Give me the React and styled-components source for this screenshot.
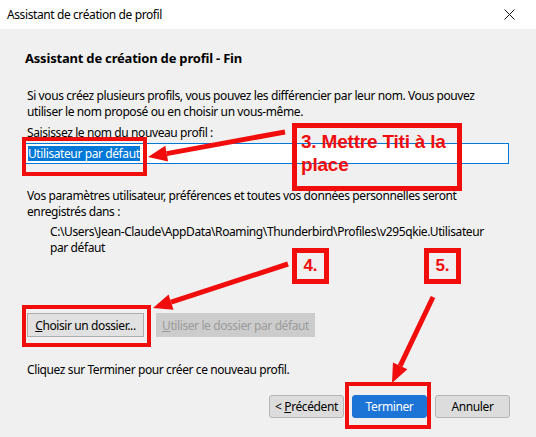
import styled, { createGlobalStyle } from "styled-components";

const GlobalStyle = createGlobalStyle`
    html, body {
        margin: 0;
        padding: 0;
        background: #f0f0f0;
    }
    body {
        font-family: 'Noto Sans', 'Liberation Sans', sans-serif;
        font-size: 12px;
        letter-spacing: -0.4px;
        color: #000000;
    }
`;

const RED = '#f20d0d';

export default function App() {
    return (
        <Window>
            <GlobalStyle />
            <TitleBar>
                <TitleText>Assistant de création de profil</TitleText>
                <CloseButton aria-label="Fermer">
                    <svg width="11" height="11" viewBox="0 0 11 11">
                        <path d="M0.5 0.5 L10.5 10.5 M10.5 0.5 L0.5 10.5" stroke="#111" strokeWidth="1" />
                    </svg>
                </CloseButton>
            </TitleBar>

            <Content>
                <Heading>Assistant de création de profil - Fin</Heading>
                <Paragraph>
                    Si vous créez plusieurs profils, vous pouvez les différencier par leur nom. Vous pouvez<br />
                    utiliser le nom proposé ou en choisir un vous-même.
                </Paragraph>
                <Label>Saisissez le nom du nouveau profil :</Label>
                <NameInput>
                    <Selected>Utilisateur par défaut</Selected>
                </NameInput>
                <Paragraph2>
                    Vos paramètres utilisateur, préférences et toutes vos données personnelles seront<br />
                    enregistrés dans :
                </Paragraph2>
                <Path>
                    C:\Users\Jean-Claude\AppData\Roaming\Thunderbird\Profiles\v295qkie.Utilisateur<br />
                    par défaut
                </Path>
                <FolderRow>
                    <FolderButton><u>C</u>hoisir un dossier...</FolderButton>
                    <FolderButton disabled><u>U</u>tiliser le dossier par défaut</FolderButton>
                </FolderRow>
                <Hint>Cliquez sur Terminer pour créer ce nouveau profil.</Hint>
                <Footer>
                    <DialogButton>&lt; <u>P</u>récédent</DialogButton>
                    <DialogButton primary>Terminer</DialogButton>
                    <DialogButton>Annuler</DialogButton>
                </Footer>
            </Content>

            {/* annotations drawn over the dialog */}
            <Frame style={{ left: 22, top: 137, width: 125, height: 39 }} />
            <Frame style={{ left: 22, top: 305, width: 129, height: 42 }} />
            <Frame style={{ left: 345, top: 382, width: 86, height: 47 }} />
            <Callout style={{ left: 292, top: 123, width: 170, height: 68 }}>
                3. Mettre Titi à la<br />place
            </Callout>
            <Step style={{ left: 292, top: 248, width: 37, height: 36 }}>4.</Step>
            <Step style={{ left: 424, top: 248, width: 37, height: 36 }}>5.</Step>
            <Arrows width="536" height="437" viewBox="0 0 536 437">
                <Arrow x1={285} y1={132} x2={148} y2={157} />
                <Arrow x1={288} y1={264} x2={153} y2={308} />
                <Arrow x1={433} y1={297} x2={392} y2={383} />
            </Arrows>
        </Window>
    );
}

function Arrow({ x1, y1, x2, y2 }) {
    const angle = Math.atan2(y2 - y1, x2 - x1);
    const len = 19;
    const half = 8;
    const bx = x2 - len * Math.cos(angle);
    const by = y2 - len * Math.sin(angle);
    const px = -Math.sin(angle) * half;
    const py = Math.cos(angle) * half;
    const points = `${x2},${y2} ${bx + px},${by + py} ${bx - px},${by - py}`;
    return (
        <g>
            <line x1={x1} y1={y1} x2={bx} y2={by} stroke={RED} strokeWidth="5" />
            <polygon points={points} fill={RED} />
        </g>
    );
}

const Window = styled.div`
    position: relative;
    width: 536px;
    height: 437px;
    overflow: hidden;
    background: #f0f0f0;
`;

const TitleBar = styled.div`
    height: 29px;
    background: #ffffff;
    display: flex;
    align-items: center;
    justify-content: space-between;
    padding: 0 0 0 7px;
`;

const TitleText = styled.span`
    font-size: 12px;
    color: #000000;
`;

const CloseButton = styled.div`
    width: 46px;
    height: 29px;
    display: flex;
    align-items: center;
    justify-content: center;
    margin-right: 4px;
`;

const Content = styled.div`
    padding: 21px 27px 0 27px;
    display: flex;
    flex-direction: column;
    align-items: flex-start;
`;

const Heading = styled.h1`
    margin: 0 0 0 -2px;
    font-size: 13px;
    font-weight: 700;
    line-height: 16px;
    letter-spacing: -0.2px;
`;

const Paragraph = styled.p`
    margin: 22px 0 0 0;
    line-height: 16px;
    white-space: nowrap;
`;

const Label = styled.div`
    margin-top: 5px;
    line-height: 16px;
`;

const NameInput = styled.div`
    margin: 2px 0 0 -2px;
    width: 480px;
    height: 19px;
    border: 1px solid #0078d7;
    background: #ffffff;
    display: flex;
    align-items: center;
    padding-left: 2px;
`;

const Selected = styled.span`
    background: #0078d7;
    color: #ffffff;
    line-height: 15px;
`;

const Paragraph2 = styled.p`
    margin: 24px 0 0 0;
    line-height: 16px;
    white-space: nowrap;
`;

const Path = styled.div`
    margin: 4px 0 0 23px;
    line-height: 16px;
    white-space: nowrap;
`;

const FolderRow = styled.div`
    margin-top: 57px;
    display: flex;
    gap: 12px;
`;

const FolderButton = styled.button`
    font-family: inherit;
    font-size: 12px;
    letter-spacing: inherit;
    white-space: nowrap;
    height: 24px;
    padding: 0 6px;
    border: ${props => props.disabled ? 'none' : '1px solid #adadad'};
    background: ${props => props.disabled ? '#cccccc' : '#e1e1e1'};
    color: ${props => props.disabled ? '#9b9b9b' : '#000000'};
    border-radius: 0;
    width: ${props => props.disabled ? '159px' : '117px'};
`;

const Hint = styled.div`
    margin-top: 25px;
    line-height: 16px;
`;

const Footer = styled.div`
    margin-top: 17px;
    align-self: flex-end;
    margin-right: -1px;
    display: flex;
    gap: 8px;
`;

const DialogButton = styled.button`
    font-family: inherit;
    font-size: 12px;
    letter-spacing: inherit;
    white-space: nowrap;
    width: 75px;
    height: 23px;
    padding: 0;
    border-radius: 3px;
    border: 1px solid ${props => props.primary ? '#1c74d6' : '#b4b4b4'};
    background: ${props => props.primary ? '#1c74d6' : '#dcdcdc'};
    color: ${props => props.primary ? '#ffffff' : '#000000'};
`;

const Frame = styled.div`
    position: absolute;
    box-sizing: border-box;
    border: 4px solid ${RED};
`;

const Callout = styled.div`
    position: absolute;
    box-sizing: border-box;
    border: 5px solid ${RED};
    padding: 2px 0 0 4px;
    font-family: 'Liberation Sans', Arial, sans-serif;
    font-weight: 700;
    font-size: 19px;
    line-height: 23px;
    letter-spacing: -0.2px;
    color: ${RED};
`;

const Step = styled.div`
    position: absolute;
    box-sizing: border-box;
    border: 5px solid ${RED};
    display: flex;
    align-items: center;
    justify-content: center;
    font-family: 'Liberation Sans', Arial, sans-serif;
    font-weight: 700;
    font-size: 17px;
    letter-spacing: 0;
    color: ${RED};
`;

const Arrows = styled.svg`
    position: absolute;
    left: 0;
    top: 0;
    pointer-events: none;
`;
